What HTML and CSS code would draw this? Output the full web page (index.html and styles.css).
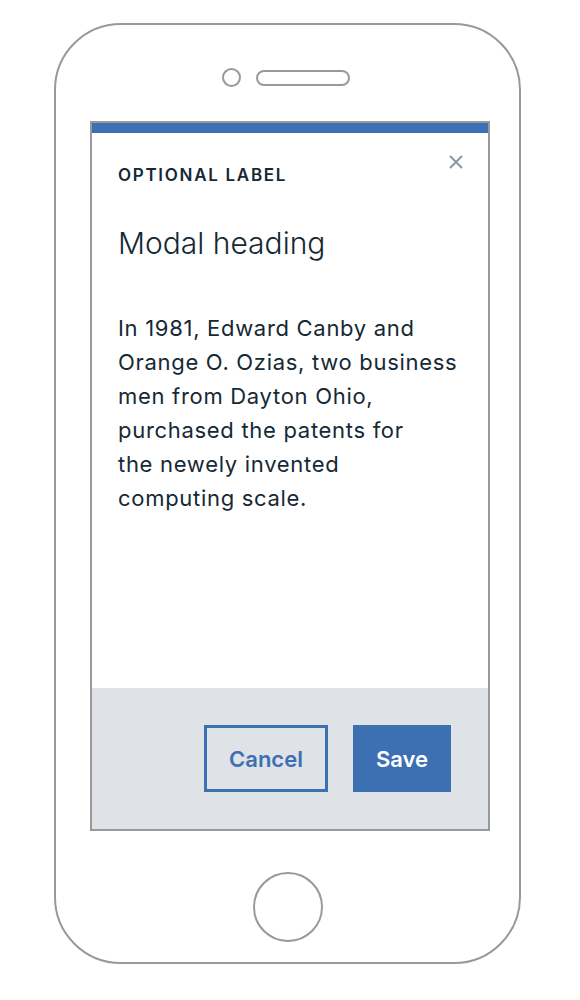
FILE: index.html
```html
<!DOCTYPE html>
<html lang="en">
<head>
<meta charset="utf-8">
<title>Modal</title>
<link rel="stylesheet" href="styles.css">
</head>
<body>
<div class="phone">
  <div class="phone-top">
    <span class="camera"></span>
    <span class="speaker"></span>
  </div>
  <div class="screen">
    <div class="modal">
      <div class="modal-header">
        <p class="modal-label">Optional label</p>
        <button class="modal-close" aria-label="Close">
          <svg width="14" height="14" viewBox="0 0 14 14" aria-hidden="true">
            <path d="M1 1 L13 13 M13 1 L1 13" stroke="#8897a2" stroke-width="2" fill="none"/>
          </svg>
        </button>
      </div>
      <h2 class="modal-heading">Modal heading</h2>
      <p class="modal-body">In 1981, Edward Canby and<br>Orange O. Ozias, two business<br>men from Dayton Ohio,<br>purchased the patents for<br>the newely invented<br>computing scale.</p>
    </div>
    <div class="modal-footer">
      <button class="btn btn-secondary">Cancel</button>
      <button class="btn btn-primary">Save</button>
    </div>
  </div>
  <div class="home-button"></div>
</div>
</body>
</html>
```

FILE: styles.css
```css
* { box-sizing: border-box; }

html, body {
  margin: 0;
  padding: 0;
  background: #ffffff;
}

body {
  font-family: Inter, "Noto Sans", sans-serif;
  color: #152935;
}

.phone {
  margin: 23px 0 0 54px;
  width: 467px;
  height: 941px;
  border: 2px solid #999999;
  border-radius: 67px;
  display: flex;
  flex-direction: column;
  align-items: center;
}

.phone-top {
  margin: 43px 4px 0 0;
  display: flex;
  align-items: center;
  gap: 15px;
}

.camera {
  width: 19px;
  height: 19px;
  border: 2px solid #999999;
  border-radius: 50%;
}

.speaker {
  width: 94px;
  height: 16px;
  border: 2px solid #999999;
  border-radius: 8px;
}

.screen {
  align-self: flex-start;
  margin: 34px 0 0 34px;
  width: 400px;
  height: 710px;
  border: 2px solid #999999;
  display: flex;
  flex-direction: column;
}

.modal {
  flex: 1;
  border-top: 10px solid #3d70b2;
  background: #ffffff;
  padding: 0 26px 0 26px;
}

.modal-header {
  display: flex;
  justify-content: space-between;
  align-items: flex-start;
}

.modal-label {
  margin: 31px 0 0 0;
  font-size: 17px;
  font-weight: 600;
  letter-spacing: 1.7px;
  text-transform: uppercase;
  line-height: 22px;
  color: #152935;
}

.modal-close {
  margin: 22px -1px 0 0;
  padding: 0;
  border: 0;
  background: none;
  width: 14px;
  height: 14px;
  display: flex;
}

.modal-heading {
  margin: 38px 0 0 0;
  font-size: 30px;
  font-weight: 300;
  line-height: 38px;
  color: #152935;
}

.modal-body {
  margin: 49px 0 0 0;
  font-size: 22px;
  font-weight: 400;
  letter-spacing: 0.7px;
  line-height: 34px;
  color: #152935;
}

.modal-footer {
  height: 141px;
  background: #dfe3e8;
  display: flex;
  justify-content: flex-end;
  align-items: center;
  gap: 25px;
  padding: 0 37px 0 0;
}

.btn {
  height: 67px;
  font-family: inherit;
  font-size: 22px;
  font-weight: 600;
  padding: 0;
  cursor: pointer;
}

.btn-secondary {
  width: 124px;
  background: transparent;
  border: 3px solid #3d70b2;
  color: #3d70b2;
}

.btn-primary {
  width: 98px;
  background: #3d70b2;
  border: 0;
  color: #ffffff;
}

.home-button {
  margin-top: 41px;
  width: 70px;
  height: 70px;
  border: 2px solid #999999;
  border-radius: 50%;
}
```
